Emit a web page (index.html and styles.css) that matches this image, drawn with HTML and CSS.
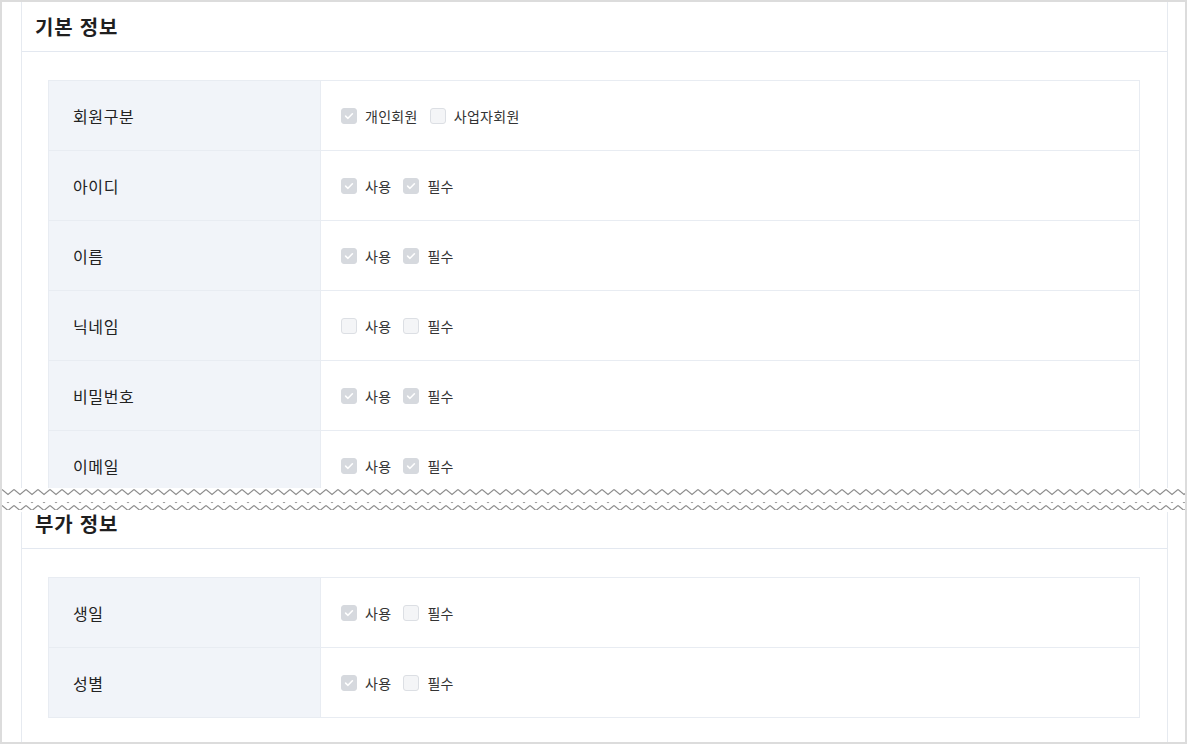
FILE: index.html
```html
<!DOCTYPE html>
<html lang="ko">
<head>
    <meta charset="utf-8">
    <link rel="stylesheet" href="styles.css">
</head>
<body>
<div class="frame">
    <!-- 기본 정보 (잘린 부분) -->
    <div class="clip-top">
        <div class="panel">
            <div class="panel-head">기본 정보</div>
            <div class="panel-body">
                <div class="field-table">
                    <div class="row">
                        <div class="label">회원구분</div>
                        <div class="options">
                            <span class="chk on"><svg viewBox="0 0 16 16"><path d="M4.6 8.1 L7 10.3 L11.4 5.8"/></svg></span><span class="txt">개인회원</span>
                            <span class="chk"></span><span class="txt">사업자회원</span>
                        </div>
                    </div>
                    <div class="row">
                        <div class="label">아이디</div>
                        <div class="options">
                            <span class="chk on"><svg viewBox="0 0 16 16"><path d="M4.6 8.1 L7 10.3 L11.4 5.8"/></svg></span><span class="txt">사용</span>
                            <span class="chk on"><svg viewBox="0 0 16 16"><path d="M4.6 8.1 L7 10.3 L11.4 5.8"/></svg></span><span class="txt">필수</span>
                        </div>
                    </div>
                    <div class="row">
                        <div class="label">이름</div>
                        <div class="options">
                            <span class="chk on"><svg viewBox="0 0 16 16"><path d="M4.6 8.1 L7 10.3 L11.4 5.8"/></svg></span><span class="txt">사용</span>
                            <span class="chk on"><svg viewBox="0 0 16 16"><path d="M4.6 8.1 L7 10.3 L11.4 5.8"/></svg></span><span class="txt">필수</span>
                        </div>
                    </div>
                    <div class="row">
                        <div class="label">닉네임</div>
                        <div class="options">
                            <span class="chk"></span><span class="txt">사용</span>
                            <span class="chk"></span><span class="txt">필수</span>
                        </div>
                    </div>
                    <div class="row">
                        <div class="label">비밀번호</div>
                        <div class="options">
                            <span class="chk on"><svg viewBox="0 0 16 16"><path d="M4.6 8.1 L7 10.3 L11.4 5.8"/></svg></span><span class="txt">사용</span>
                            <span class="chk on"><svg viewBox="0 0 16 16"><path d="M4.6 8.1 L7 10.3 L11.4 5.8"/></svg></span><span class="txt">필수</span>
                        </div>
                    </div>
                    <div class="row">
                        <div class="label">이메일</div>
                        <div class="options">
                            <span class="chk on"><svg viewBox="0 0 16 16"><path d="M4.6 8.1 L7 10.3 L11.4 5.8"/></svg></span><span class="txt">사용</span>
                            <span class="chk on"><svg viewBox="0 0 16 16"><path d="M4.6 8.1 L7 10.3 L11.4 5.8"/></svg></span><span class="txt">필수</span>
                        </div>
                    </div>
                </div>
            </div>
        </div>
    </div>

    <!-- 부가 정보 -->
    <div class="panel">
        <div class="panel-head">부가 정보</div>
        <div class="panel-body">
            <div class="field-table">
                <div class="row">
                    <div class="label">생일</div>
                    <div class="options">
                        <span class="chk on"><svg viewBox="0 0 16 16"><path d="M4.6 8.1 L7 10.3 L11.4 5.8"/></svg></span><span class="txt">사용</span>
                        <span class="chk"></span><span class="txt">필수</span>
                    </div>
                </div>
                <div class="row">
                    <div class="label">성별</div>
                    <div class="options">
                        <span class="chk on"><svg viewBox="0 0 16 16"><path d="M4.6 8.1 L7 10.3 L11.4 5.8"/></svg></span><span class="txt">사용</span>
                        <span class="chk"></span><span class="txt">필수</span>
                    </div>
                </div>
            </div>
        </div>
    </div>

    <!-- 물결 모양 생략 표시 -->
    <div class="tear">
        <svg width="100%" height="24">
            <defs>
                <pattern id="zigzag" width="12" height="8" patternUnits="userSpaceOnUse">
                    <polyline points="0,1.5 6,6.5 12,1.5" fill="none" stroke="#8c8c8c" stroke-width="1.1"/>
                </pattern>
            </defs>
            <rect x="0" y="0" width="100%" height="8" fill="url(#zigzag)"/>
            <rect x="0" y="14" width="100%" height="8" fill="url(#zigzag)"/>
        </svg>
    </div>
</div>
</body>
</html>
```

FILE: styles.css
```css
body {
    margin: 0;
    background: #ffffff;
    font-family: "Noto Sans CJK KR", "Liberation Sans", sans-serif;
    color: #222222;
}

.frame {
    position: relative;
    width: 1187px;
    height: 744px;
    box-sizing: border-box;
    border: 2px solid #dcdcdc;
    overflow: hidden;
    background: #ffffff;
}

/* 위쪽 패널은 물결 위치에서 잘림 */
.clip-top {
    height: 497px;
    overflow: hidden;
}

.panel {
    margin: 0 17px 0 19px;
    border-left: 1px solid #e6eaf0;
    border-right: 1px solid #e6eaf0;
    height: 760px;
}

.panel-head {
    height: 49px;
    display: flex;
    align-items: center;
    padding-left: 13px;
    border-bottom: 1px solid #e3e8f0;
    font-size: 20px;
    font-weight: 700;
    color: #1f1f1f;
    letter-spacing: 0.8px;
}

.panel-body {
    padding: 28px 27px 28px 26px;
}

.field-table {
    border: 1px solid #e8ecf2;
}

.row {
    display: grid;
    grid-template-columns: 272px 1fr;
    height: 69px;
}

.row + .row {
    border-top: 1px solid #e8ecf2;
}

.label {
    background: #f1f4f9;
    border-right: 1px solid #e8ecf2;
    display: flex;
    align-items: center;
    padding-left: 24px;
    font-size: 16px;
    letter-spacing: 0.6px;
    color: #222222;
}

.options {
    display: flex;
    align-items: center;
    padding-left: 20px;
    font-size: 14px;
    letter-spacing: 0.3px;
    color: #333333;
}

.chk {
    width: 16px;
    height: 16px;
    box-sizing: border-box;
    border-radius: 3px;
    border: 1px solid #dcdfe4;
    background: #f4f5f7;
    display: inline-flex;
    margin-right: 8px;
}

.chk.on {
    background: #d6d9de;
    border-color: #d6d9de;
}

.chk svg {
    width: 16px;
    height: 16px;
    margin: -1px;
}

.chk svg path {
    fill: none;
    stroke: #ffffff;
    stroke-width: 1.6;
    stroke-linecap: round;
    stroke-linejoin: round;
}

.txt {
    margin-right: 12px;
}

/* 생략 구간: 내용 위에 겹쳐 그림 */
.tear {
    position: absolute;
    left: 0;
    right: 0;
    top: 486px;
    height: 24px;
    background: #ffffff;
}

.tear svg {
    display: block;
}
```
